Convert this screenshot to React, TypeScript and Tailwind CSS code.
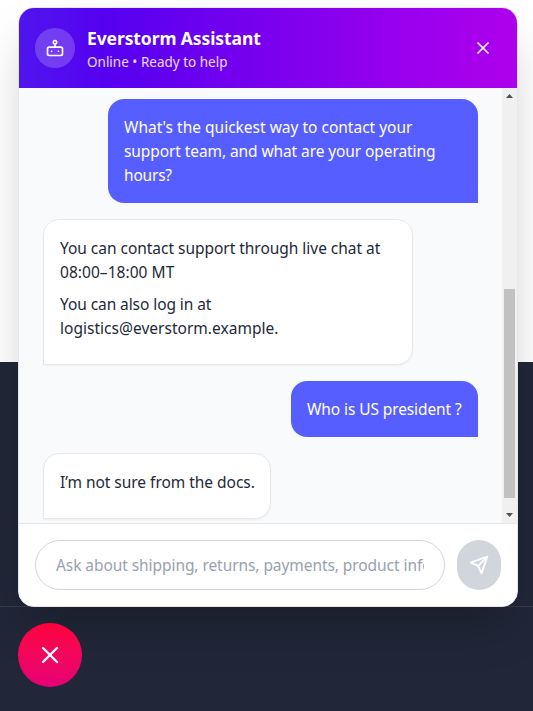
import { X } from "lucide-react";
import type { ReactNode } from "react";

function BotIcon() {
  return (
    <svg className="size-5" viewBox="0 0 24 24" fill="none" stroke="currentColor" strokeWidth="2" strokeLinecap="round" strokeLinejoin="round">
      <rect x="3" y="11" width="18" height="10" rx="2" />
      <circle cx="12" cy="5" r="2" />
      <path d="M12 7v4M8 16h.01M16 16h.01" />
    </svg>
  );
}

function SendIcon() {
  return (
    <svg className="size-5" viewBox="0 0 24 24" fill="none" stroke="currentColor" strokeWidth="2.2" strokeLinecap="round" strokeLinejoin="round">
      <path d="m22 2-7 20-4-9-9-4Z" />
      <path d="M22 2 11 13" />
    </svg>
  );
}

function UserMessage({ className, children }: { className: string; children: ReactNode }) {
  return (
    <div className={`self-end rounded-2xl rounded-br-none bg-[#575eff] p-4 text-white ${className}`}>{children}</div>
  );
}

function BotMessage({ className, children }: { className: string; children: ReactNode }) {
  return (
    <div className={`flex flex-col gap-2 rounded-2xl rounded-bl-none border border-gray-200 bg-white p-4 pb-6 text-[#1e2939] shadow-xs ${className}`}>
      {children}
    </div>
  );
}

function Line({ className = "", children }: { className?: string; children: ReactNode }) {
  return <span className={`block w-max whitespace-nowrap ${className}`}>{children}</span>;
}

export default function App() {
  return (
    <div className="grid h-[711px] w-full grid-cols-1 grid-rows-1 overflow-hidden bg-white font-['Noto_Sans','Open_Sans',sans-serif] text-[15.5px] leading-6">
      <div className="col-start-1 row-start-1 flex flex-col">
        <div className="h-[362px] bg-white" />
        <div className="h-[244px] bg-[#212738]" />
        <div className="flex-1 border-t border-[#343b4a] bg-[#212738]" />
      </div>

      <div className="z-10 col-start-1 row-start-1 flex flex-col items-start gap-4 pt-[7px] pl-[18px]">
        <section className="flex h-[600px] w-[500px] flex-col overflow-hidden rounded-2xl border border-gray-200 bg-white shadow-2xl">
          <header className="flex h-20 shrink-0 items-center gap-3 bg-[linear-gradient(90deg,#4f15ee_0%,#5600f0_18%,#7a00ee_50%,#9600ee_75%,#ae00ec_100%)] px-4 text-white">
            <div className="flex size-10 items-center justify-center rounded-full bg-white/20">
              <BotIcon />
            </div>
            <div className="flex-1">
              <h1 className="text-[17.5px] leading-7 font-bold whitespace-nowrap tracking-[-0.1px]">Everstorm Assistant</h1>
              <p className="text-[13.5px] leading-5 whitespace-nowrap text-white/85">Online • Ready to help</p>
            </div>
            <button className="mr-2 flex size-5 items-center justify-center" aria-label="Close">
              <X size={20} />
            </button>
          </header>

          <div className="flex h-[435px] shrink-0 overflow-hidden bg-gray-50">
            <main className="flex flex-1 flex-col items-start gap-4 px-6 pt-[11px]">
              <UserMessage className="w-[370px]">
                <Line>What's the quickest way to contact your</Line>
                <Line className="tracking-[-0.09px]">support team, and what are your operating</Line>
                <Line className="tracking-[-0.2px]">hours?</Line>
              </UserMessage>
              <BotMessage className="w-[370px]">
                <p>
                  <Line className="tracking-[-0.03px]">You can contact support through live chat at</Line>
                  <Line className="tracking-[0.05px]">08:00–18:00 MT</Line>
                </p>
                <p>
                  <Line className="tracking-[-0.08px]">You can also log in at</Line>
                  <Line className="tracking-[0.02px]">logistics@everstorm.example.</Line>
                </p>
              </BotMessage>
              <UserMessage className="w-[187px]">
                <Line className="tracking-[-0.1px]">Who is US president ?</Line>
              </UserMessage>
              <BotMessage className="w-[228px]">
                <Line className="tracking-[-0.03px]">I’m not sure from the docs.</Line>
              </BotMessage>
            </main>
            <div className="flex w-[15px] shrink-0 flex-col items-center bg-[#f0f0f0]">
              <svg className="h-[15px] w-[15px] shrink-0" viewBox="0 0 15 15" fill="#505050"><path d="M4 10 7.5 6 11 10Z" /></svg>
              <div className="mt-[186px] h-[209px] w-[11px] bg-[#c1c1c1]" />
              <svg className="mt-auto h-[15px] w-[15px] shrink-0" viewBox="0 0 15 15" fill="#505050"><path d="M4 5 7.5 9 11 5Z" /></svg>
            </div>
          </div>

          <form className="flex h-[83px] shrink-0 gap-3 border-t border-gray-200 bg-white p-4">
            <div className="flex h-[50px] w-[410px] items-center rounded-full border border-[#d1d5dc] px-5 text-[#99a1af]">
              <div className="w-full overflow-hidden whitespace-nowrap tracking-[-0.07px]">Ask about shipping, returns, payments, product info</div>
            </div>
            <button type="button" className="flex h-[50px] w-11 items-center justify-center rounded-full bg-[#d1d5dc] text-white" aria-label="Send">
              <SendIcon />
            </button>
          </form>
        </section>

        <button className="flex size-16 items-center justify-center rounded-full bg-linear-to-b from-[#ff003b] to-[#e60076] text-white" aria-label="Close chat">
          <X size={28} />
        </button>
      </div>
    </div>
  );
}
